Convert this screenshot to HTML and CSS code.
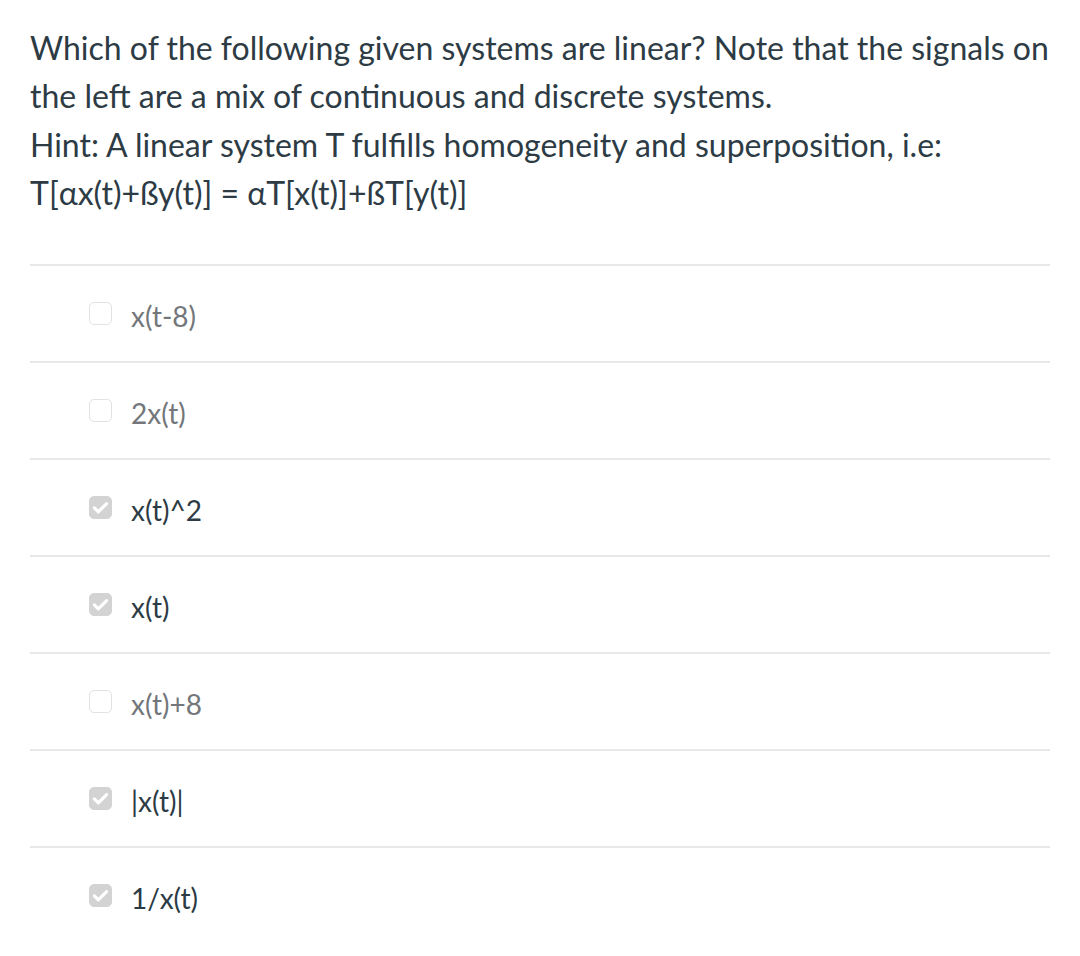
FILE: index.html
```html
<!DOCTYPE html>
<html>
<head>
<meta charset="utf-8">
<link rel="stylesheet" href="styles.css">
</head>
<body>
<div class="page">
  <div class="question">
    <p>Which of the following given systems are linear? Note that the signals on the left are a mix of continuous and discrete systems.</p>
    <p>Hint: A linear system T fulfills homogeneity and superposition, i.e:</p>
    <p>T[αx(t)+ßy(t)] = αT[x(t)]+ßT[y(t)]</p>
  </div>
  <div class="answers">
    <div class="answer"><span class="box"></span><span class="label muted">x(t-8)</span></div>
    <div class="answer"><span class="box"></span><span class="label muted">2x(t)</span></div>
    <div class="answer"><span class="box checked"><svg viewBox="0 0 24 24"><path d="M5 12.5l4.5 4.5L19 7.5" fill="none" stroke="#fff" stroke-width="3.6" stroke-linecap="round" stroke-linejoin="round"/></svg></span><span class="label">x(t)^2</span></div>
    <div class="answer"><span class="box checked"><svg viewBox="0 0 24 24"><path d="M5 12.5l4.5 4.5L19 7.5" fill="none" stroke="#fff" stroke-width="3.6" stroke-linecap="round" stroke-linejoin="round"/></svg></span><span class="label">x(t)</span></div>
    <div class="answer"><span class="box"></span><span class="label muted">x(t)+8</span></div>
    <div class="answer"><span class="box checked"><svg viewBox="0 0 24 24"><path d="M5 12.5l4.5 4.5L19 7.5" fill="none" stroke="#fff" stroke-width="3.6" stroke-linecap="round" stroke-linejoin="round"/></svg></span><span class="label">|x(t)|</span></div>
    <div class="answer"><span class="box checked"><svg viewBox="0 0 24 24"><path d="M5 12.5l4.5 4.5L19 7.5" fill="none" stroke="#fff" stroke-width="3.6" stroke-linecap="round" stroke-linejoin="round"/></svg></span><span class="label">1/x(t)</span></div>
  </div>
</div>
</body>
</html>
```
FILE: styles.css
```css
html, body {
  margin: 0;
  padding: 0;
  background: #fff;
}
.page {
  padding: 24px 30px 0 30px;
  font-family: Lato, "Open Sans", sans-serif;
  color: #2d3b45;
}
.question p {
  margin: 0;
  font-size: 32px;
  line-height: 48.3px;
}
.answers {
  margin-top: 47px;
}
.answer {
  display: flex;
  align-items: center;
  height: 95px;
  border-top: 2px solid #e8e8e8;
  padding-left: 59px;
}
.box {
  width: 21px;
  height: 21px;
  border: 1.5px solid #e2e2e2;
  border-radius: 5px;
  background: #fff;
  display: flex;
  align-items: center;
  justify-content: center;
  flex: none;
}
.box.checked {
  background: #d3d3d3;
  border-color: #d3d3d3;
}
.box svg {
  width: 21px;
  height: 21px;
}
.label {
  margin-left: 19px;
  font-size: 28px;
  color: #2d3b45;
  position: relative;
  top: 2px;
}
.label.muted {
  color: #73777b;
}
```
